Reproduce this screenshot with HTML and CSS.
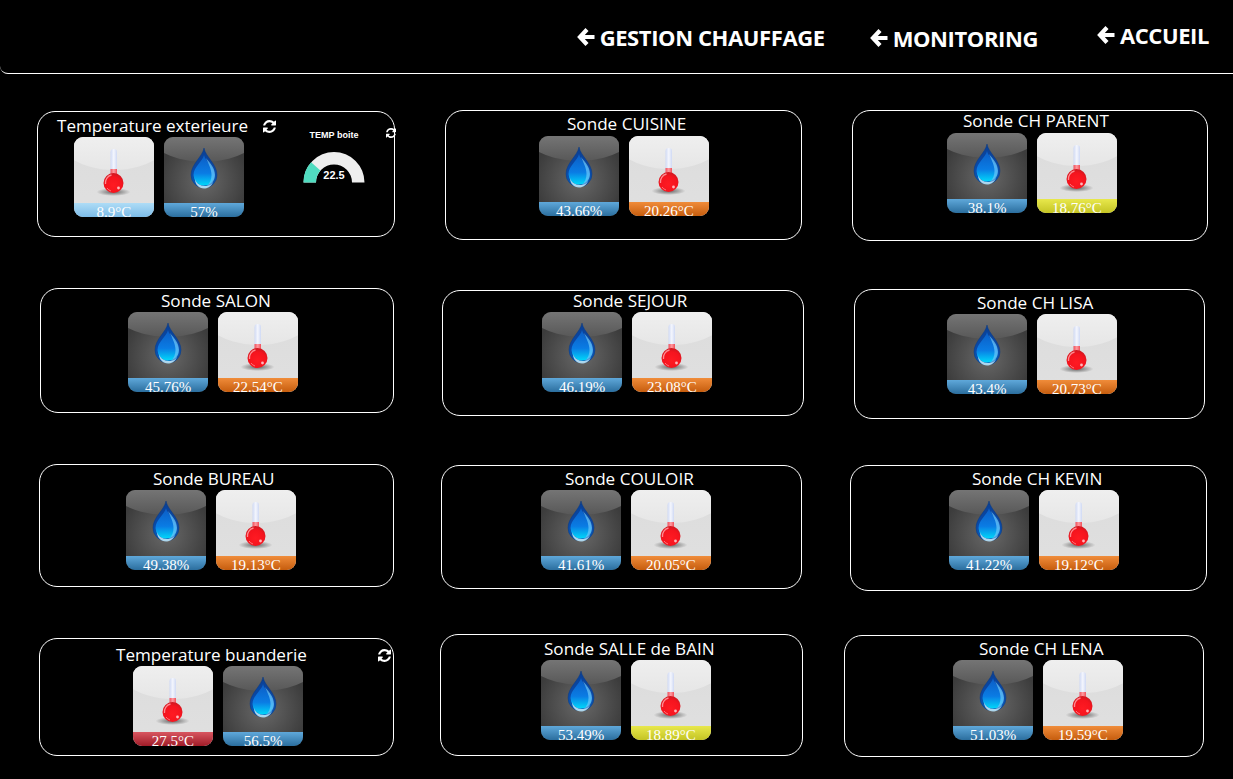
FILE: index.html
```html
<!DOCTYPE html>
<html lang="en">
<head>
    <meta charset="UTF-8">
    <title>Temperatures</title>
    <link rel="stylesheet" href="styles.css">
</head>
<body>
    <svg class="defs" width="0" height="0" aria-hidden="true">
        <defs>
            <radialGradient id="bulbGrad" cx="0.5" cy="0.62" r="0.6">
                <stop offset="0" stop-color="#ff1a22"/>
                <stop offset="0.7" stop-color="#f5141e"/>
                <stop offset="1" stop-color="#d01820"/>
            </radialGradient>
            <linearGradient id="stemGrad" x1="0" y1="0" x2="1" y2="0">
                <stop offset="0" stop-color="#cfd9f4"/>
                <stop offset="0.5" stop-color="#f4f6fd"/>
                <stop offset="1" stop-color="#cfd9f4"/>
            </linearGradient>
            <linearGradient id="neckGrad" x1="0" y1="0" x2="1" y2="0">
                <stop offset="0" stop-color="#f0505a"/>
                <stop offset="0.5" stop-color="#ff9aa0"/>
                <stop offset="1" stop-color="#f0505a"/>
            </linearGradient>
            <radialGradient id="shadowGrad">
                <stop offset="0.2" stop-color="#000" stop-opacity="0.45"/>
                <stop offset="1" stop-color="#000" stop-opacity="0"/>
            </radialGradient>
            <linearGradient id="dropGrad" x1="0" y1="0" x2="0" y2="1">
                <stop offset="0" stop-color="#0a3f94"/>
                <stop offset="0.6" stop-color="#0a4aa8"/>
                <stop offset="1" stop-color="#0a5cb8"/>
            </linearGradient>
            <linearGradient id="dropInner" x1="0" y1="0" x2="0" y2="1">
                <stop offset="0" stop-color="#0c5cc4"/>
                <stop offset="0.6" stop-color="#0a7ce4"/>
                <stop offset="1" stop-color="#00d8fa"/>
            </linearGradient>
            <symbol id="thermo" viewBox="0 0 80 80">
                <ellipse cx="39.500" cy="55" rx="17" ry="4" fill="url(#shadowGrad)"/>
                <rect x="36.500" y="12" width="6.500" height="30" rx="3.200" fill="url(#stemGrad)"/>
                <path d="M36.500 32h6.500v8h-6.500Z" fill="url(#neckGrad)"/>
                <circle cx="39.500" cy="46" r="10" fill="url(#bulbGrad)"/>
                <path d="M31.500 47a8 8 0 0 1 6-9" fill="none" stroke="#ff8a90" stroke-width="1.300"/>
                <path d="M33 51a8 8 0 0 0 4 3" fill="none" stroke="#ff8a90" stroke-width="0.800"/>
                <circle cx="44.500" cy="51" r="1.400" fill="#ffb8bc"/>
            </symbol>
            <symbol id="drop" viewBox="0 0 80 80">
                <path d="M40 11C38.500 20 27 27 27 38a13 13 0 0 0 26 0C53 27 41.500 20 40 11Z" fill="url(#dropGrad)" stroke="#0b3a80" stroke-width="0.500"/>
                <path d="M40 18C39 24 29.500 30 29.500 38a10.500 10.500 0 0 0 21 0C50.500 30 41 24 40 18Z" fill="url(#dropInner)"/>
                <path d="M42 21c4 5 9 10 9 17 0 6-4 10-8 11 3-3 4.500-7 4.500-11 0-6-3-11-5.500-17Z" fill="#6cc8fa" opacity="0.7"/>
                <path d="M31 42c1 4 5 7 10 7 3 0 6-1 8-4-2 5-6 6.500-9 6.500-5 0-9-4-9-9.500Z" fill="#d4f8ff" opacity="0.8"/>
            </symbol>
            <symbol id="refresh" viewBox="0 0 1536 1536">
                <path fill="#fff" d="M1511 928q0 5-1 7-64 268-268 434.500t-478 166.500q-146 0-282.500-55t-243.500-157l-129 129q-19 19-45 19t-45-19-19-45v-448q0-26 19-45t45-19h448q26 0 45 19t19 45-19 45l-137 137q71 66 161 102t187 36q134 0 250-65t186-179q11-17 53-117 8-23 30-23h192q13 0 22.500 9.500t9.500 22.500zm25-800v448q0 26-19 45t-45 19h-448q-26 0-45-19t-19-45 19-45l138-138q-148-137-349-137-134 0-250 65t-186 179q-11 17-53 117-8 23-30 23h-199q-13 0-22.500-9.500t-9.500-22.500v-7q65-268 270-434.500t480-166.500q146 0 284 55.500t245 156.500l130-129q19-19 45-19t45 19 19 45z"/>
            </symbol>
            <symbol id="arrow" viewBox="0 0 18 20">
                <path d="M10 2.500L3 10l7 7.500M3.500 10H17.500" fill="none" stroke="#fff" stroke-width="4.200"/>
            </symbol>
        </defs>
    </svg>

    <header class="top-bar">
        <a class="nav-link nav-gestion"><svg class="nav-arrow"><use href="#arrow"/></svg>GESTION CHAUFFAGE</a>
        <a class="nav-link nav-monitoring"><svg class="nav-arrow"><use href="#arrow"/></svg>MONITORING</a>
        <a class="nav-link nav-accueil"><svg class="nav-arrow"><use href="#arrow"/></svg>ACCUEIL</a>
    </header>

    <main class="board">
        <div class="col col-1">
            <section class="card card-ext">
                <div class="card-main">
                    <div class="card-head">
                        <h2 class="card-title">Temperature exterieure</h2>
                        <svg class="refresh"><use href="#refresh"/></svg>
                    </div>
                    <div class="tiles">
                        <div class="tile tile-light"><svg class="tile-icon"><use href="#thermo"/></svg><span class="tile-val val-cold">8.9°C</span></div>
                        <div class="tile tile-dark"><svg class="tile-icon"><use href="#drop"/></svg><span class="tile-val val-blue">57%</span></div>
                    </div>
                </div>
                <div class="gauge">
                    <div class="gauge-label">TEMP boite</div>
                    <svg class="gauge-dial" viewBox="0 0 62 32">
                        <path d="M0.500 31.500a30.500 30.500 0 0 1 61 0h-12.500a18 18 0 0 0-36 0Z" fill="#eeeeee"/>
                        <path d="M0.500 31.500a30.500 30.500 0 0 1 7.600-20.200l9.300 8.300a18 18 0 0 0-4.400 11.900Z" fill="#50dcc0"/>
                        <text class="gauge-value" x="31" y="28">22.5</text>
                    </svg>
                </div>
                <svg class="refresh refresh-small"><use href="#refresh"/></svg>
            </section>
            <section class="card card-salon">
                <h2 class="card-title">Sonde SALON</h2>
                <div class="tiles">
                    <div class="tile tile-dark"><svg class="tile-icon"><use href="#drop"/></svg><span class="tile-val val-blue">45.76%</span></div>
                    <div class="tile tile-light"><svg class="tile-icon"><use href="#thermo"/></svg><span class="tile-val val-orange">22.54°C</span></div>
                </div>
            </section>
            <section class="card card-bureau">
                <h2 class="card-title">Sonde BUREAU</h2>
                <div class="tiles">
                    <div class="tile tile-dark"><svg class="tile-icon"><use href="#drop"/></svg><span class="tile-val val-blue">49.38%</span></div>
                    <div class="tile tile-light"><svg class="tile-icon"><use href="#thermo"/></svg><span class="tile-val val-orange">19.13°C</span></div>
                </div>
            </section>
            <section class="card card-buanderie">
                <div class="card-head">
                    <h2 class="card-title">Temperature buanderie</h2>
                    <svg class="refresh"><use href="#refresh"/></svg>
                </div>
                <div class="tiles">
                    <div class="tile tile-light"><svg class="tile-icon"><use href="#thermo"/></svg><span class="tile-val val-red">27.5°C</span></div>
                    <div class="tile tile-dark"><svg class="tile-icon"><use href="#drop"/></svg><span class="tile-val val-blue">56.5%</span></div>
                </div>
            </section>
        </div>

        <div class="col col-2">
            <section class="card card-cuisine">
                <h2 class="card-title">Sonde CUISINE</h2>
                <div class="tiles">
                    <div class="tile tile-dark"><svg class="tile-icon"><use href="#drop"/></svg><span class="tile-val val-blue">43.66%</span></div>
                    <div class="tile tile-light"><svg class="tile-icon"><use href="#thermo"/></svg><span class="tile-val val-orange">20.26°C</span></div>
                </div>
            </section>
            <section class="card card-sejour">
                <h2 class="card-title">Sonde SEJOUR</h2>
                <div class="tiles">
                    <div class="tile tile-dark"><svg class="tile-icon"><use href="#drop"/></svg><span class="tile-val val-blue">46.19%</span></div>
                    <div class="tile tile-light"><svg class="tile-icon"><use href="#thermo"/></svg><span class="tile-val val-orange">23.08°C</span></div>
                </div>
            </section>
            <section class="card card-couloir">
                <h2 class="card-title">Sonde COULOIR</h2>
                <div class="tiles">
                    <div class="tile tile-dark"><svg class="tile-icon"><use href="#drop"/></svg><span class="tile-val val-blue">41.61%</span></div>
                    <div class="tile tile-light"><svg class="tile-icon"><use href="#thermo"/></svg><span class="tile-val val-orange">20.05°C</span></div>
                </div>
            </section>
            <section class="card card-sdb">
                <h2 class="card-title">Sonde SALLE de BAIN</h2>
                <div class="tiles">
                    <div class="tile tile-dark"><svg class="tile-icon"><use href="#drop"/></svg><span class="tile-val val-blue">53.49%</span></div>
                    <div class="tile tile-light"><svg class="tile-icon"><use href="#thermo"/></svg><span class="tile-val val-yellow">18.89°C</span></div>
                </div>
            </section>
        </div>

        <div class="col col-3">
            <section class="card card-parent">
                <h2 class="card-title">Sonde CH PARENT</h2>
                <div class="tiles">
                    <div class="tile tile-dark"><svg class="tile-icon"><use href="#drop"/></svg><span class="tile-val val-blue">38.1%</span></div>
                    <div class="tile tile-light"><svg class="tile-icon"><use href="#thermo"/></svg><span class="tile-val val-yellow">18.76°C</span></div>
                </div>
            </section>
            <section class="card card-lisa">
                <h2 class="card-title">Sonde CH LISA</h2>
                <div class="tiles">
                    <div class="tile tile-dark"><svg class="tile-icon"><use href="#drop"/></svg><span class="tile-val val-blue">43.4%</span></div>
                    <div class="tile tile-light"><svg class="tile-icon"><use href="#thermo"/></svg><span class="tile-val val-orange">20.73°C</span></div>
                </div>
            </section>
            <section class="card card-kevin">
                <h2 class="card-title">Sonde CH KEVIN</h2>
                <div class="tiles">
                    <div class="tile tile-dark"><svg class="tile-icon"><use href="#drop"/></svg><span class="tile-val val-blue">41.22%</span></div>
                    <div class="tile tile-light"><svg class="tile-icon"><use href="#thermo"/></svg><span class="tile-val val-orange">19.12°C</span></div>
                </div>
            </section>
            <section class="card card-lena">
                <h2 class="card-title">Sonde CH LENA</h2>
                <div class="tiles">
                    <div class="tile tile-dark"><svg class="tile-icon"><use href="#drop"/></svg><span class="tile-val val-blue">51.03%</span></div>
                    <div class="tile tile-light"><svg class="tile-icon"><use href="#thermo"/></svg><span class="tile-val val-orange">19.59°C</span></div>
                </div>
            </section>
        </div>
    </main>
</body>
</html>
```

FILE: styles.css
```css
* {
    margin: 0;
    padding: 0;
    box-sizing: border-box;
}

body {
    background: #000;
    color: #fff;
    font-family: "Open Sans", sans-serif;
    height: 779px;
    overflow: hidden;
}

.defs {
    display: block;
    height: 0;
}

/* top bar */
.top-bar {
    height: 74px;
    border-bottom: 1px solid #fff;
    border-bottom-left-radius: 8px;
    display: flex;
    justify-content: flex-end;
    align-items: flex-start;
    padding-right: 24px;
}

.nav-link {
    display: flex;
    align-items: center;
    font-size: 22px;
    font-weight: 700;
    letter-spacing: -0.4px;
    line-height: 28px;
    color: #fff;
}

.nav-arrow {
    width: 18px;
    height: 20px;
    margin-right: 5px;
}

.nav-gestion { margin-top: 23px; }
.nav-monitoring { margin-top: 24px; margin-left: 45px; }
.nav-accueil { margin-top: 21px; margin-left: 59px; }

/* board */
.board {
    display: flex;
    padding-left: 37px;
}

.col-1 { width: 403px; }
.col-2 { width: 404px; }
.col-3 { width: 360px; }

.card {
    border: 1px solid #fff;
    border-radius: 18px;
    margin-left: var(--x);
    margin-top: var(--top);
    width: var(--w);
    height: var(--h);
    padding-top: var(--pt);
}

.card-title {
    font-size: 17.100px;
    font-weight: 400;
    line-height: 20px;
    margin-left: var(--tx);
    white-space: nowrap;
}

.tiles {
    display: flex;
    gap: 10px;
    margin-left: var(--ix);
    margin-top: var(--gap, 1px);
}

.tile {
    width: 80px;
    height: 80px;
    border-radius: 9px;
    overflow: hidden;
    position: relative;
}

.tile-light {
    background: linear-gradient(#dcdcdc, #e0e0e0);
}

.tile-dark {
    background: radial-gradient(circle at 50% 55%, #686868, #3c3c3c 75%);
}

/* glossy cap on top of the tile */
.tile::before {
    content: "";
    position: absolute;
    left: -25px;
    right: -25px;
    top: -60px;
}

.tile-light::before {
    height: 93px;
    border-radius: 50%;
    background: linear-gradient(#f0f0f0 60%, #e6e6e6);
}

.tile-dark::before {
    height: 85px;
    border-radius: 50%;
    background: linear-gradient(#7a7a7a 65%, #585858);
}

.tile-icon {
    position: absolute;
    left: 0;
    top: 0;
    width: 80px;
    height: 80px;
}

.tile-val {
    position: absolute;
    left: 0;
    right: 0;
    bottom: 0;
    height: 14px;
    overflow: hidden;
    font-family: "Liberation Serif", serif;
    font-size: 15px;
    line-height: 18px;
    text-align: center;
    color: #fff;
}

.val-blue { background: linear-gradient(#5fa8da, #2b6e9e); }
.val-cold { background: linear-gradient(#aedcf6, #7dbce8); }
.val-orange { background: linear-gradient(#f08c3a, #c65d0e); }
.val-yellow { background: linear-gradient(#e8e84c, #c4c424); }
.val-red { background: linear-gradient(#d85660, #a01c28); }

.refresh {
    width: 13px;
    height: 13px;
    flex: none;
}

/* first card carries the gauge beside its tiles */
.card-ext {
    display: flex;
    align-items: flex-start;
}

.card-main {
    width: 230px;
    flex: none;
}

.card-head {
    display: flex;
    align-items: center;
}

.gauge {
    width: 62px;
    margin-left: 35px;
    flex: none;
    padding-top: 14px;
}

.gauge-label {
    font-family: "Liberation Sans", sans-serif;
    font-size: 9px;
    font-weight: 700;
    line-height: 11px;
    text-align: center;
    white-space: nowrap;
}

.gauge-dial {
    display: block;
    width: 62px;
    height: 32px;
    margin-top: 10px;
}

.gauge-value {
    font-family: "Liberation Sans", sans-serif;
    font-size: 11px;
    font-weight: 700;
    fill: #fff;
    text-anchor: middle;
}

.refresh-small {
    width: 10px;
    height: 10px;
    margin-left: 21px;
    margin-top: 12px;
}

/* each card sits a little off grid in the original */
.card-ext { --x: 0px; --top: 37px; --w: 358px; --h: 126px; --pt: 4px; --tx: 19px; --ix: 36px; }
.card-salon { --x: 3px; --top: 51px; --w: 354px; --h: 125px; --pt: 2px; --tx: 120px; --ix: 87px; }
.card-bureau { --x: 2px; --top: 51px; --w: 355px; --h: 123px; --pt: 4px; --tx: 113px; --ix: 86px; }
.card-buanderie { --x: 2px; --top: 51px; --w: 355px; --h: 118px; --pt: 6px; --tx: 76px; --ix: 93px; }

.card-cuisine { --x: 5px; --top: 36px; --w: 357px; --h: 130px; --pt: 3px; --tx: 121px; --ix: 93px; --gap: 2px; }
.card-sejour { --x: 2px; --top: 50px; --w: 362px; --h: 126px; --pt: 0px; --tx: 130px; --ix: 99px; }
.card-couloir { --x: 1px; --top: 49px; --w: 361px; --h: 124px; --pt: 3px; --tx: 123px; --ix: 99px; }
.card-sdb { --x: 0px; --top: 45px; --w: 363px; --h: 122px; --pt: 4px; --tx: 103px; --ix: 100px; }

.card-parent { --x: 8px; --top: 36px; --w: 356px; --h: 131px; --pt: 0px; --tx: 110px; --ix: 94px; --gap: 2px; }
.card-lisa { --x: 10px; --top: 48px; --w: 351px; --h: 130px; --pt: 3px; --tx: 122px; --ix: 92px; }
.card-kevin { --x: 6px; --top: 46px; --w: 357px; --h: 126px; --pt: 3px; --tx: 121px; --ix: 98px; }
.card-lena { --x: 0px; --top: 44px; --w: 360px; --h: 122px; --pt: 3px; --tx: 134px; --ix: 108px; }

.card-ext .card-head .refresh { margin-left: 15px; }
.card-buanderie .card-head .refresh { margin-left: 71px; }
```
